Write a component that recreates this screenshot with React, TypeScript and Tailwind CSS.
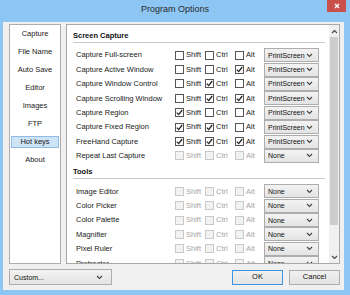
import type { ReactNode } from "react";

type Row = {
  label: string;
  shift?: boolean;
  ctrl?: boolean;
  alt?: boolean;
  disabled?: boolean;
  key: string;
};

const screenRows: Row[] = [
  { label: "Capture Full-screen", key: "PrintScreen" },
  { label: "Capture Active Window", alt: true, key: "PrintScreen" },
  { label: "Capture Window Control", ctrl: true, key: "PrintScreen" },
  { label: "Capture Scrolling Window", ctrl: true, alt: true, key: "PrintScreen" },
  { label: "Capture Region", shift: true, key: "PrintScreen" },
  { label: "Capture Fixed Region", shift: true, ctrl: true, key: "PrintScreen" },
  { label: "FreeHand Capture", shift: true, ctrl: true, alt: true, key: "PrintScreen" },
  { label: "Repeat Last Capture", disabled: true, key: "None" },
];

const toolRows: Row[] = [
  "Image Editor",
  "Color Picker",
  "Color Palette",
  "Magnifier",
  "Pixel Ruler",
  "Protractor",
].map((label) => ({ label, disabled: true, key: "None" }));

const menu = ["Capture", "File Name", "Auto Save", "Editor", "Images", "FTP", "Hot keys", "About"];

const Chevron = ({ up = false }: { up?: boolean }) => (
  <svg width="7" height="5" viewBox="0 0 7 5" className={up ? "rotate-180 shrink-0" : "shrink-0"}>
    <path d="M1 1 L3.5 3.5 L6 1" fill="none" stroke="#444" strokeWidth="1.1" />
  </svg>
);

const Check = ({ label, checked, disabled, w }: { label: string; checked?: boolean; disabled?: boolean; w: string }) => (
  <div className={`flex items-center gap-[2px] ${w}`}>
    <div
      className={`w-[9px] h-[9px] border flex items-center justify-center ${
        disabled ? "border-[#c9c9c9] bg-[#f2f2f2]" : "border-[#555] bg-white"
      }`}
    >
      {checked && (
        <svg width="7" height="7" viewBox="0 0 7 7">
          <path d="M0.8 3.6 L2.7 5.6 L6.2 1" fill="none" stroke="#222" strokeWidth="1.3" />
        </svg>
      )}
    </div>
    <span className={disabled ? "text-[#a6a6a6]" : "text-[#222]"}>{label}</span>
  </div>
);

const Combo = ({ value, className }: { value: string; className: string }) => (
  <div
    className={`flex items-center justify-between border border-[#adadad] bg-gradient-to-b from-[#f3f3f3] to-[#e4e4e4] pl-[3px] text-[7px] text-[#111] ${className}`}
  >
    <span className="whitespace-nowrap">{value}</span>
    <Chevron />
  </div>
);

const HotRow = ({ row }: { row: Row }) => (
  <div className="flex items-center h-[14.4px] shrink-0">
    <div className="w-[102px] pl-[3px] text-[#222] whitespace-nowrap">{row.label}</div>
    <Check label="Shift" checked={row.shift} disabled={row.disabled} w="w-[30px]" />
    <Check label="Ctrl" checked={row.ctrl} disabled={row.disabled} w="w-[30px]" />
    <Check label="Alt" checked={row.alt} disabled={row.disabled} w="w-[29px]" />
    <Combo value={row.key} className="w-[55px] h-[14px] pr-[5px]" />
  </div>
);

const Section = ({ title, children, top }: { title: string; children: ReactNode; top: string }) => (
  <div className={`flex flex-col ${top}`}>
    <div className="h-[10px] leading-[10px] font-bold text-[#111]">{title}</div>
    <div className="mt-[1px] h-[1px] w-[252px] bg-[#c8c8c8]" />
    <div className="mt-[5px] flex flex-col">{children}</div>
  </div>
);

export default function App() {
  return (
    <div
      className="w-[350px] h-[295px] bg-[#8dc5f3] flex flex-col overflow-hidden text-[7.5px] leading-none"
      style={{ fontFamily: '"Liberation Sans", Arial, sans-serif' }}
    >
      {/* title bar */}
      <div className="h-[22px] flex items-start shrink-0">
        <div className="w-[23px]" />
        <div className="flex-1 text-center pt-[5px] text-[9px] text-[#2b2b2b]">Program Options</div>
        <div className="w-[19px] h-[12px] mr-[4px] bg-[#c9504c] flex items-center justify-center">
          <svg width="6" height="6" viewBox="0 0 6 6">
            <path d="M1 1 L5 5 M5 1 L1 5" stroke="#fff" strokeWidth="1.4" />
          </svg>
        </div>
      </div>

      {/* body */}
      <div className="ml-[3px] mr-[6px] h-[268px] bg-[#f0f0f0] flex flex-col pt-[2px] pl-[6px] pr-[4px]">
        <div className="flex gap-[5px] h-[240px]">
          {/* sidebar */}
          <div className="w-[52px] h-full border border-[#adadad] bg-white flex flex-col gap-[6px] pt-[3px] px-[1px]">
            {menu.map((m) => (
              <div
                key={m}
                className={`h-[12px] flex items-center justify-center text-[#1a1a1a] ${
                  m === "Hot keys" ? "bg-[#cde4f7] border border-[#8fbbe6]" : ""
                }`}
              >
                {m}
              </div>
            ))}
          </div>

          {/* content panel */}
          <div className="w-[274px] h-full border border-[#a8a8a8] bg-white flex overflow-hidden">
            <div className="flex-1 pl-[6px] flex flex-col overflow-hidden">
              <Section title="Screen Capture" top="pt-[6px]">
                {screenRows.map((r) => (
                  <HotRow key={r.label} row={r} />
                ))}
              </Section>
              <Section title="Tools" top="mt-[4px]">
                {toolRows.map((r) => (
                  <HotRow key={r.label} row={r} />
                ))}
              </Section>
            </div>
            {/* scrollbar */}
            <div className="w-[10px] bg-[#f0f0f0] flex flex-col shrink-0">
              <div className="h-[12px] flex items-center justify-center">
                <Chevron up />
              </div>
              <div className="mx-[1px] h-[188px] bg-[#cdcdcd]" />
              <div className="flex-1" />
              <div className="h-[12px] flex items-center justify-center">
                <Chevron />
              </div>
            </div>
          </div>
        </div>

        {/* bottom row */}
        <div className="mt-[5px] h-[16px] flex items-center">
          <Combo value="Custom..." className="w-[103px] h-[16px] pl-[4px] pr-[8px] text-[7.5px]" />
          <div className="flex-1" />
          <button className="w-[51px] h-[15px] border border-[#3c94e0] bg-gradient-to-b from-[#f0f0f0] to-[#e3e3e3] text-[#111]">
            OK
          </button>
          <button className="ml-[6px] w-[51px] h-[15px] border border-[#adadad] bg-gradient-to-b from-[#f0f0f0] to-[#e3e3e3] text-[#111]">
            Cancel
          </button>
        </div>
      </div>
    </div>
  );
}
